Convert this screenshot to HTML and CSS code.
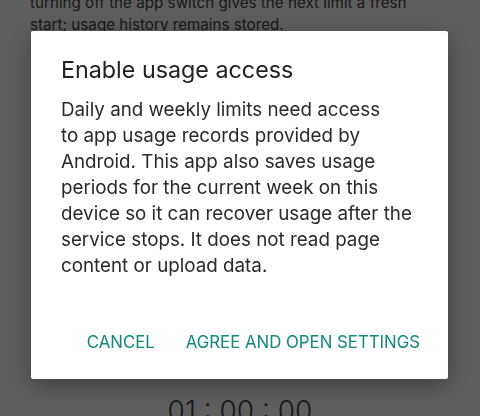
FILE: index.html
```html
<!DOCTYPE html>
<html>
<head>
<meta charset="utf-8">
<link rel="stylesheet" href="styles.css">
</head>
<body>
<div class="page">
  <p class="note">turning off the app switch gives the next limit a fresh<br>start; usage history remains stored.</p>
  <div class="spacer"></div>
  <div class="timer">01 : 00 : 00</div>
</div>
<div class="scrim"></div>
<div class="dialog">
  <h1 class="title">Enable usage access</h1>
  <p class="message">Daily and weekly limits need access<br>to app usage records provided by<br>Android. This app also saves usage<br>periods for the current week on this<br>device so it can recover usage after the<br>service stops. It does not read page<br>content or upload data.</p>
  <div class="actions">
    <button class="btn">CANCEL</button>
    <button class="btn">AGREE AND OPEN SETTINGS</button>
  </div>
</div>
</body>
</html>
```

FILE: styles.css
```css
html, body {
  margin: 0;
  padding: 0;
  width: 480px;
  height: 416px;
  overflow: hidden;
  background: #ffffff;
  font-family: Inter, Roboto, "Noto Sans", sans-serif;
}
.page {
  display: flex;
  flex-direction: column;
  height: 416px;
  padding: 0 30px;
  box-sizing: border-box;
  overflow: hidden;
}
.note {
  margin: -8px 0 0 0;
  font-size: 15.2px;
  line-height: 22px;
  color: #444;
  white-space: nowrap;
}
.spacer { flex: 1; }
.timer {
  text-align: center;
  font-size: 28px;
  font-weight: 300;
  color: #444;
  line-height: 40px;
  margin-bottom: -15px;
  flex: none;
}
.scrim {
  position: fixed;
  inset: 0;
  background: rgba(0,0,0,0.63);
}
.dialog {
  position: fixed;
  left: 31px;
  top: 31px;
  width: 417px;
  height: 348px;
  box-sizing: border-box;
  background: #fff;
  border-radius: 2px;
  box-shadow: 0 6px 24px rgba(0,0,0,0.35);
  padding: 24px 28px 0 30px;
  display: flex;
  flex-direction: column;
}
.title {
  margin: 0;
  font-size: 23.3px;
  font-weight: 400;
  line-height: 30px;
  color: #212121;
}
.message {
  margin: 12px 0 0 0;
  font-size: 18.8px;
  line-height: 26px;
  color: #2a2a2a;
  white-space: nowrap;
}
.actions {
  margin-top: auto;
  margin-bottom: 26px;
  display: flex;
  justify-content: flex-end;
  gap: 31px;
}
.btn {
  border: 0;
  background: none;
  padding: 0;
  font-family: Inter, Roboto, "Noto Sans", sans-serif;
  font-size: 16.8px;
  color: #12897a;
  line-height: 22px;
}
```
